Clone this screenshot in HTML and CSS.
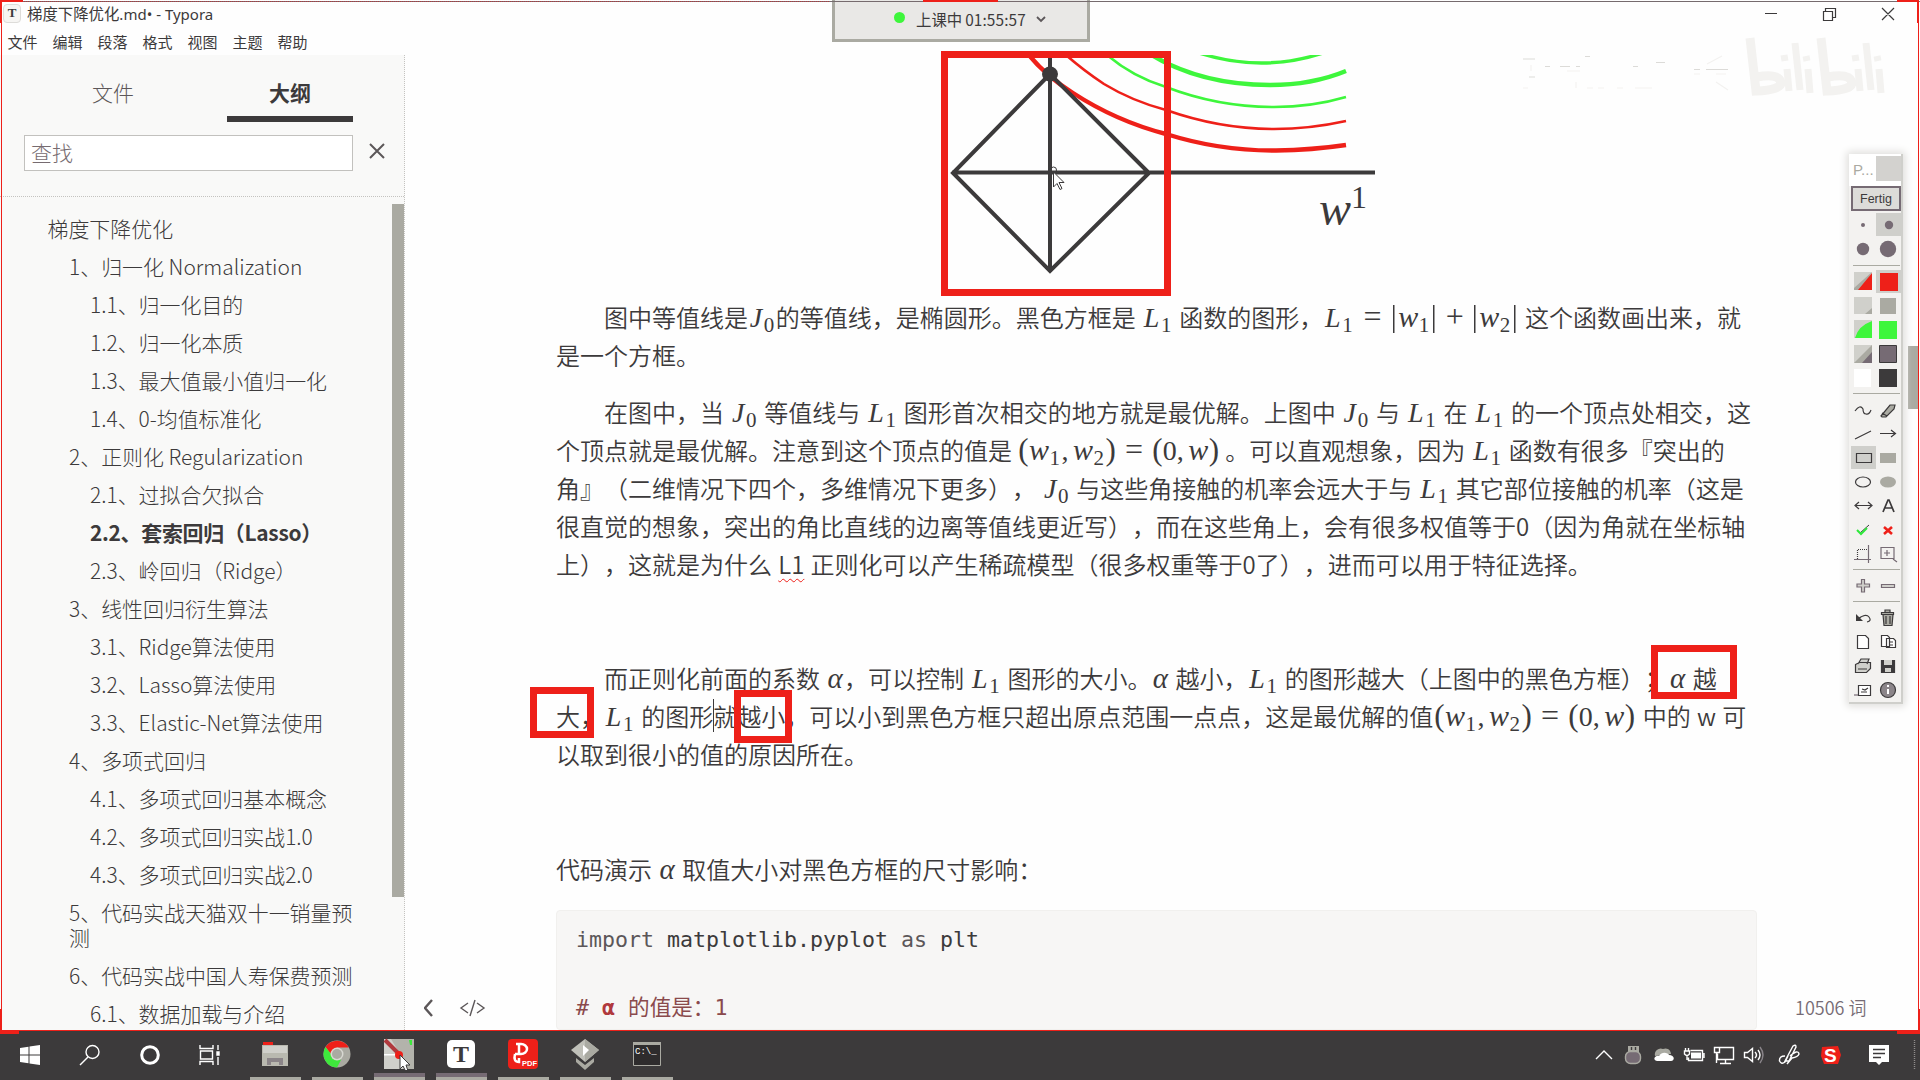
FILE: index.html
```html
<!DOCTYPE html>
<html lang="zh-CN">
<head>
<meta charset="utf-8">
<title>梯度下降优化.md• - Typora</title>
<link rel="stylesheet" href="styles.css">
</head>
<body>
<header class="titlebar">
  <span class="app-icon">T</span>
  <span class="title">梯度下降优化<span class="latin">.md• - Typora</span></span>
  <svg class="winbtns" width="132" height="14" viewBox="0 0 132 14"><path d="M1 6.5H13M59.500 4.500h9v9h-9zM61.500 4V1.500h10v9h-2.500M118 1l12 12M130 1l-12 12"/></svg>
</header>
<nav class="menubar"><span>文件</span><span>编辑</span><span>段落</span><span>格式</span><span>视图</span><span>主题</span><span>帮助</span></nav>

<main class="workspace">
  <aside class="sidebar">
    <div class="tabs"><span class="tab">文件</span><span class="tab active">大纲</span></div>
    <div class="search"><div class="search-box">查找</div><svg width="16" height="16" viewBox="0 0 16 16"><path d="M1 1l14 14M15 1L1 15"/></svg></div>
    <div class="outline">
      <ul class="items">
        <li class="l1">梯度下降优化</li>
        <li class="l2">1、归一化 Normalization</li>
        <li class="l3">1.1、归一化目的</li>
        <li class="l3">1.2、归一化本质</li>
        <li class="l3">1.3、最大值最小值归一化</li>
        <li class="l3">1.4、0-均值标准化</li>
        <li class="l2">2、正则化 Regularization</li>
        <li class="l3">2.1、过拟合欠拟合</li>
        <li class="l3 current">2.2、套索回归（Lasso）</li>
        <li class="l3">2.3、岭回归（Ridge）</li>
        <li class="l2">3、线性回归衍生算法</li>
        <li class="l3">3.1、Ridge算法使用</li>
        <li class="l3">3.2、Lasso算法使用</li>
        <li class="l3">3.3、Elastic-Net算法使用</li>
        <li class="l2">4、多项式回归</li>
        <li class="l3">4.1、多项式回归基本概念</li>
        <li class="l3">4.2、多项式回归实战1.0</li>
        <li class="l3">4.3、多项式回归实战2.0</li>
        <li class="l2">5、代码实战天猫双十一销量预<br>测</li>
        <li class="l2">6、代码实战中国人寿保费预测</li>
        <li class="l3">6.1、数据加载与介绍</li>
      </ul>
      <div class="side-scroll"></div>
    </div>
  </aside>

  <section class="side-tools">
    <svg width="62" height="20" viewBox="0 0 62 20"><path class="back" d="M8 2L1 10l7 8"/><path class="src" d="M44 5l-7 5 7 5M53 5l7 5-7 5M51 2l-5 16"/></svg>
  </section>

  <article class="doc">
    <svg class="figure" width="1201" height="243" viewBox="556 55 1201 243">
      <g class="contours">
        <path class="r thick" d="M1028 54Q1046 76 1073 93Q1116 121 1166 134Q1220 151 1276 150.500Q1312 150 1346 145"/>
        <path class="r" d="M1066 55Q1083 70 1104 84Q1132 101 1166 110Q1220 129 1274 129Q1310 129 1346 121"/>
        <path class="g" d="M1107 55Q1133 77 1166 87Q1218 107 1274 107Q1312 107 1346 97"/>
        <path class="g thick" d="M1148 53Q1200 85 1270 85Q1312 85 1346 71"/>
        <path class="g mid" d="M1196 52Q1262 74 1326 52"/>
      </g>
      <path class="axes" d="M1050 55V272M952 172.500H1375M1050 74L953 173L1050 271L1149 173Z"/>
      <ellipse class="dot" cx="1050" cy="74" rx="8" ry="7.500"/>
      <text class="wlabel" x="1319" y="225">w</text><text class="wsup" x="1351" y="208">1</text>
      <path class="pointer" d="M1053.500 172v15l3.500-3.500 3 6 2-1-3-6h5z"/><circle class="ring" cx="1053.500" cy="170" r="3"/>
    </svg>
    <p>
      <span class="line ind">图中等值线是<i class="J">J</i><sub>0</sub>的等值线，是椭圆形。黑色方框是 <i class="L">L</i><sub>1</sub> 函数的图形，<i class="L">L</i><sub>1</sub><b class="rel">=</b><b class="bar"></b><i class="w">w</i><sub>1</sub><b class="bar"></b><b class="rel plus">+</b><b class="bar"></b><i class="w">w</i><sub>2</sub><b class="bar"></b> 这个函数画出来，就</span>
      <span class="line">是一个方框。</span>
    </p>
    <p>
      <span class="line ind">在图中，当 <i class="J">J</i><sub>0</sub> 等值线与 <i class="L">L</i><sub>1</sub> 图形首次相交的地方就是最优解。上图中 <i class="J">J</i><sub>0</sub> 与 <i class="L">L</i><sub>1</sub> 在 <i class="L">L</i><sub>1</sub> 的一个顶点处相交，这</span>
      <span class="line">个顶点就是最优解。注意到这个顶点的值是 <b class="par">(</b><i class="w">w</i><sub>1</sub><b class="com">,</b><i class="w">w</i><sub>2</sub><b class="par">)</b><b class="rel">=</b><b class="par">(</b><b class="num">0</b><b class="com">,</b><i class="w">w</i><b class="par">)</b> 。可以直观想象，因为 <i class="L">L</i><sub>1</sub> 函数有很多『突出的</span>
      <span class="line">角』（二维情况下四个，多维情况下更多）， <i class="J">J</i><sub>0</sub> 与这些角接触的机率会远大于与 <i class="L">L</i><sub>1</sub> 其它部位接触的机率（这是</span>
      <span class="line">很直觉的想象，突出的角比直线的边离等值线更近写），而在这些角上，会有很多权值等于0（因为角就在坐标轴</span>
      <span class="line">上），这就是为什么 <span class="misspell">L1</span> 正则化可以产生稀疏模型（很多权重等于0了），进而可以用于特征选择。</span>
    </p>
    <p class="gap">
      <span class="line ind">而正则化前面的系数 <i class="al">α</i>，可以控制 <i class="L">L</i><sub>1</sub> 图形的大小。<i class="al">α</i> 越小，<i class="L">L</i><sub>1</sub> 的图形越大（上图中的黑色方框）；<i class="al">α</i> 越</span>
      <span class="line">大，<i class="L">L</i><sub>1</sub> 的图形就越小，可以小到黑色方框只超出原点范围一点点，这是最优解的值<span class="pair"><b class="par">(</b><i class="w">w</i><sub>1</sub><b class="com">,</b><i class="w">w</i><sub>2</sub><b class="par">)</b><b class="rel">=</b><b class="par">(</b><b class="num">0</b><b class="com">,</b><i class="w">w</i><b class="par">)</b></span> 中的 w 可</span>
      <span class="line">以取到很小的值的原因所在。</span>
    </p>
    <p class="gap"><span class="line">代码演示 <i class="al">α</i> 取值大小对黑色方框的尺寸影响：</span></p>
    <pre class="code"><span class="kw">import</span> matplotlib.pyplot <span class="kw">as</span> plt

<span class="cm"># <b>α</b> 的值是：1</span></pre>
  </article>
  <div class="right-rail"><div class="doc-scroll"></div><div class="words">10506 词</div></div>
</main>

<footer class="taskbar">
  <div class="apps">
    <div class="app"><svg width="20" height="20" viewBox="0 0 20 20"><path fill="#fff" d="M0 3l8.500-1.200v7.700H0zM9.500 1.600L20 0v9.500H9.500zM0 10.500h8.500v7.700L0 17zM9.500 10.500H20V20L9.500 18.400z"/></svg></div>
    <div class="app"><svg width="22" height="22" viewBox="0 0 22 22" class="ln"><circle cx="13.500" cy="8" r="6.500"/><path d="M9 13l-8 8"/></svg></div>
    <div class="app"><svg width="22" height="22" viewBox="0 0 22 22"><circle cx="11" cy="11" r="8.300" fill="none" stroke="#fff" stroke-width="3"/></svg></div>
    <div class="app"><svg width="22" height="20" viewBox="0 0 22 20" class="ln"><path d="M1 0v3.500h13V0M1 20v-3.500h13V20M1.500 6h12v8h-12zM19 0v5M19 12v8"/><path fill="#fff" d="M18 7h2v3h-2z"/></svg></div>
    <div class="app run"><svg width="28" height="26" viewBox="0 0 28 26"><path fill="#b9b9b0" d="M1 4h26v21H1z"/><path fill="#ee2019" d="M2 1h10v3H2z"/><path fill="#d0d0cb" d="M2 5h24v7H2z"/><path fill="#8b8589" d="M6 17h16v7h-4v-3h-8v3H6z"/></svg></div>
    <div class="app run"><svg width="28" height="28" viewBox="0 0 28 28"><circle cx="14" cy="14" r="13.500" fill="#aaaaa2"/><path fill="#ee2019" d="M2.500 7A13.500 13.500 0 0 1 25.700 7.500H14L8 14z"/><path fill="#3ee83c" d="M2.500 7A13.500 13.500 0 0 0 14 27.500l4-7.500-10-6z"/><circle cx="14" cy="14" r="6.500" fill="#d8d8d2"/><circle cx="14" cy="14" r="5" fill="#aaaaa2"/></svg></div>
    <div class="app run hot"><svg width="32" height="32" viewBox="0 0 32 32"><path fill="#d0d0cb" d="M1 1h30v30H1z"/><path fill="#b3b3ab" d="M8 1h23v30H21L17 16z"/><path fill="#fff" d="M1 16h14v1.500H1z"/><path fill="#3ee83c" d="M26 2h3v5h-2z"/><path stroke="#b0393d" stroke-width="4" d="M2 2l13 13"/><circle cx="16" cy="17" r="4" fill="#ee2019"/><path fill="#fff" stroke="#3c3a3b" d="M17 17v14l3-3 3 6 2-1-2-6h4z"/></svg></div>
    <div class="app run hot"><span class="t-icon">T</span></div>
    <div class="app run"><svg width="30" height="30" viewBox="0 0 30 30"><rect width="30" height="30" rx="4" fill="#ee2019"/><path fill="none" stroke="#fff" stroke-width="2.500" d="M8 5h5a6 5 0 0 1 0 10H7M11 5v10M7 15q-2 8 4 8v-4"/><text x="14" y="27" font-size="7.500" font-weight="700" fill="#fff">PDF</text></svg></div>
    <div class="app run"><svg width="30" height="32" viewBox="0 0 30 32"><path fill="#c0c0b9" d="M15 1l14 11-14 12L1 12z"/><path fill="#aaaaa2" d="M15 1l14 11-14 12zM6 20l9 7 9-7v4l-9 8-9-8z"/><path fill="#fff" d="M13 7l6 5-6 6z"/></svg></div>
    <div class="app run"><svg width="28" height="24" viewBox="0 0 28 24"><path fill="#2e2c2d" stroke="#aaaaa2" d="M.500.500h27v23H.500z"/><path fill="#aaaaa2" d="M0 0h28v3H0z"/><text x="2" y="12" font-size="9" fill="#fff" class="mono">C:\_</text></svg></div>
  </div>
  <div class="tray">
    <svg class="ln" width="325" height="30" viewBox="1594 1040 325 30">
      <path d="M1596 1059l8-8 8 8"/>
      <path fill="#aaaaa2" stroke="none" d="M1628 1046h11v6h-11z"/><rect x="1625.500" y="1051.500" width="15" height="12" rx="5" fill="#766b74" stroke="#aaaaa2"/><path stroke="#3c3a3b" d="M1631.500 1047v3M1635.500 1047v3"/>
      <path fill="#aaaaa2" stroke="none" d="M1655 1056a6 6 0 0 1 8-7c5-2 8 2 8 5z"/><path fill="#fff" stroke="none" d="M1657 1061c-5-1-2-6 2-5 3-5 9-3 10-1 6 0 6 6 2 6z"/>
      <path d="M1690.500 1050.500h12v10h-14v-3M1704 1053v5M1684.500 1051h5v3q-2.500 3-5 0zM1685.500 1048v3M1688.500 1048v3M1687 1055v5"/><path fill="#fff" stroke="none" d="M1691 1052.500h10v6h-10z"/>
      <path d="M1719.500 1047.500h14v12h-16v-6M1725.500 1060v3M1720 1063.500h11M1714.500 1047.500h5v5h-5zM1716.500 1052v11"/>
      <path d="M1744.500 1052.500h3l5-4v13l-5-4h-3zM1755 1052q3 3 0 6M1758 1050q4 5 0 10"/><path stroke="#8a858a" d="M1760 1047q6 8 0 16"/>
      <path d="M1785 1061l8-15q3-2 3 1l-7 14zM1785 1056q-6 0-5.500 5 2 4 5.500 1l3-6M1790 1056q8-7 9-2-1 3-7 4l-5 6"/>
      <path fill="#ee2019" stroke="none" d="M1822 1047l16-1 3 9-3 9h-14l-3-8z"/><text x="1824" y="1062" font-size="19" font-weight="900" fill="#fff" stroke="none">S</text>
      <path fill="#fff" stroke="none" d="M1869 1045h20v17h-7l-3 3-3-3h-7z"/><path stroke="#3c3a3b" d="M1873 1049.500h12M1873 1053.500h12M1873 1057.500h8"/>
      <path stroke="#8f8c8b" stroke-dasharray="1 1" d="M1914.500 1040v30"/>
    </svg>
  </div>
</footer>

<!-- class timer, drawn over the title bar -->
<div class="timer"><i class="live"></i><span>上课中</span><span class="clock">01:55:57</span><svg width="10" height="8" viewBox="0 0 10 8"><path d="M1 2l4 4 4-4"/></svg></div>

<svg class="watermark" width="380" height="70" viewBox="1515 32 380 70">
  <g class="name"><path d="M1523 59h12M1529 77h6M1545 66.500h5M1560 66.500h10M1576 66.500h4M1585 56.500h5M1633 66.500h5M1656 62.500h9M1694 69.500h6M1706 69.500h22"/><path class="faint" d="M1523 88h5M1531 65v6M1576 88v-6M1567 71h13M1587 88h6M1598 88h6M1617 88h6M1635 88h17M1694 74h6M1716 74h10M1707 64l15-8M1716 82l12 8"/></g>
  <g class="logo"><path class="fat" d="M1750 38l6 53q26-1 25-9-3-9-24-5"/><path d="M1784 55l1 6M1787 69l2 22M1795 43l5 47M1806 56l1 5M1808 69l2 24"/></g>
  <g class="logo"><path class="fat" d="M1821 38l6 53q26-1 25-9-3-9-24-5"/><path d="M1855 55l1 6M1858 69l2 22M1866 43l5 47M1877 56l1 5M1879 69l2 24"/></g>
</svg>

<!-- screen pen palette -->
<div class="palette">
  <div class="pal-head"><span>P...</span><i></i></div>
  <div class="pal-btn">Fertig</div>
  <svg width="50" height="494" viewBox="1851 211 50 494">
    <path fill="#cfcfcb" d="M1876 213h25v23h-25zM1876 270h25v23h-25zM1851 446h25v23h-25z"/>
    <g fill="#766b74"><circle cx="1863" cy="225" r="2"/><circle cx="1889" cy="225" r="4.200"/><circle cx="1863" cy="249" r="6.200"/><circle cx="1888" cy="249" r="8.200"/></g>
    <path stroke="#aaaaa2" d="M1853 265.500h47M1853 393.500h47M1853 569.500h47M1853 601.500h47"/>
    <g fill="#d0d0cb"><path d="M1854 272h18v18h-18zM1854 297h18v17h-18zM1854 320h18v18h-18zM1854 345h18v18h-18z"/></g>
    <path fill="#aaaaa2" d="M1872 272l-18 16v2h7zM1854 363l18-18v18z"/>
    <path fill="#ee2019" d="M1872 273v17h-14zM1880 273h18v18h-18z"/>
    <path fill="#aaaaa2" d="M1872 308v6h-7zM1880 298h16v16h-16z"/>
    <path fill="#3ef63c" d="M1872 321v17h-17q3-12 17-17zM1879 321h18v18h-18z"/>
    <path fill="#766b74" stroke="#3c3a3b" d="M1879.500 345.500h17v17h-17z"/><path fill="#766b74" d="M1872 352v11h-10z"/>
    <path fill="#fff" d="M1854 369h17v18h-17z"/><path fill="#3c3a3b" d="M1879 369h18v18h-18z"/>
    <g class="pi">
      <path d="M1855 411q5-7 8-2 0 5 3 5 3 1 5-4M1855 439l16-8M1880 433.500h15M1891 430l4.500 3.500-4.500 3.500M1856.500 453.500h15v9h-15zM1856 505.500h15M1859 502l-4 3.500 4 3.500M1868 502l4 3.500-4 3.500"/>
      <path fill="#aaaaa2" d="M1881 416l9-11h5l-1 4-8 8h-4zM1882 413l5 3"/>
      <ellipse cx="1863" cy="482" rx="7.500" ry="5"/>
      <path stroke-width="1.700" d="M1883 512l5-12h1l5 12M1885 508h7"/>
      <path class="gr" d="M1854 559.500h17M1868.500 545v18M1881 547.500h13v11h-13zM1887 550v6M1884 553h6M1893 559l4 3"/><path stroke-dasharray="1 1" d="M1857.500 559v-9.500h10"/>
      <path fill="#d0d0cb" stroke="#766b74" d="M1857 584h4.500v-4.500h3v4.500h5v3h-5v5h-3v-5h-4.500zM1881.500 584.500h13v3h-13z"/>
      <path d="M1858 619q8-6 11-2 3 4-2 5"/><path fill="#3c3a3b" stroke="none" d="M1856 614v7h7z"/>
      <path fill="#aaaaa2" d="M1883 614.500h10l-1 11h-8zM1881.500 612.500h12v2h-12zM1885 612v-2h5v2M1886 616v8M1890 616v8"/>
      <path fill="#fff" d="M1857.500 635.500h8l3 3v10h-11zM1881.500 635.500h6l2 2v9h-8zM1886.500 638.500h7l2 2v7h-9zM1889 642h4M1889 645h4"/>
      <path fill="#d0d0cb" d="M1858 664l3-5h8l-2 5M1855.500 664.500l4-2h11v6l-4 4h-11zM1858 669h9"/>
      <path fill="#3c3a3b" d="M1881.500 660.500h13v12h-13z"/><path fill="#d0d0cb" stroke="none" d="M1884 660h8v5h-8zM1885 668h6v4h-6z"/>
      <path fill="#fff" d="M1858.500 685.500h12v10h-12zM1861 692h6M1862 689l3 1 3-2"/><path class="gr" d="M1854 695h4"/>
      <circle cx="1888" cy="690" r="7.500" fill="#8b8589"/><path stroke="#fff" stroke-width="2" d="M1888 689v5M1888 685v2"/>
    </g>
    <path fill="#aaaaa2" d="M1880 453h16v10h-16z"/><ellipse cx="1888" cy="482" rx="8" ry="5.500" fill="#aaaaa2"/>
    <path fill="none" stroke="#3c3a3b" d="M1860 533l9-8"/><path fill="none" stroke="#2ee83c" stroke-width="2" d="M1857 530l4 4 6-6"/>
    <path fill="none" stroke="#ee2019" stroke-width="2.600" d="M1884 527l8 7M1892 527l-8 7"/>
  </svg>
</div>

<!-- pen marks -->
<div class="mark m-fig"></div><div class="mark m-left"></div><div class="mark m-mid"></div><div class="mark m-right"></div><div class="caret"></div>
<svg class="frame" width="1920" height="1036" viewBox="0 0 1920 1036">
  <path stroke="#766b6e" d="M0 1.500H1920"/><path stroke="#b0393d" stroke-dasharray="1 1" d="M0 1.500H830M0 1030.500H1920"/>
  <path stroke="#ee2019" d="M1.500 0V1030M1918.500 0V1030M0 1030.500H1920"/>
  <path fill="#ee2019" d="M0 0h23v2H2v21H0zM923 0h75v2h-75zM1897 0h22v23h-2V2h-20zM0 1009h2v21h17v4H0zM1918 1009h2v25h-23v-4h21z"/>
</svg>
</body>
</html>
```
FILE: styles.css
```css
* { box-sizing: border-box; }
body {
  margin: 0; width: 1920px; height: 1080px; overflow: hidden; position: relative;
  display: flex; flex-direction: column; background: #fefefe; color: #3c3a3b;
  font-family: "Noto Sans CJK SC", "Open Sans", sans-serif;
  text-spacing-trim: space-all;
}
svg { display: block; fill: none; }

.titlebar { height: 30px; display: flex; align-items: center; padding: 0 0 3px 3px; font-size: 15.4px; }
.app-icon {
  width: 18px; height: 19px; border: 1px solid #dddcd9; border-radius: 4px; background: #f6f5f3;
  font: 700 13px/16px "Liberation Serif", serif; text-align: center;
}
.title { margin-left: 6px; line-height: 26px; }
.latin { font-family: "Noto Sans", "Open Sans", sans-serif; font-size: 15px; }
.winbtns { margin: 1px 24px 0 auto; stroke: #3c3a3b; stroke-width: 1.2; }
.menubar { height: 25px; display: flex; gap: 15px; padding-left: 7.5px; font-size: 15px; line-height: 23px; }

.workspace { flex: none; height: 975px; display: flex; overflow: hidden; }
.sidebar { width: 405px; background: #f9f9f8; border-right: 1px dotted #c4c3c0; font-size: 20.95px; font-weight: 300; display: flex; flex-direction: column; }
.tabs { display: flex; height: 67px; padding-left: 50px; }
.tab { width: 126px; margin-right: 51px; text-align: center; line-height: 74px; color: #5c5759; height: 67px; }
.tab.active { margin: 0; font-weight: 700; color: #3c3a3b; border-bottom: 6px solid #3c3a3b; }
.search { display: flex; align-items: center; gap: 16px; padding: 0 0 0 24px; height: 36px; margin-top: 13px; }
.search-box { width: 329px; height: 36px; background: #fff; border: 1px solid #c2c1be; padding-left: 6px; line-height: 33px; color: #766b70; }
.search svg { stroke: #5c5759; stroke-width: 2; margin-bottom: 5px; }
.outline { margin-top: 25px; border-top: 1px dotted #c4c3c0; flex: 1; display: flex; justify-content: space-between; }
.items { list-style: none; margin: 0; padding: 13px 0 0; white-space: nowrap; width: 380px; }
.items li { line-height: 25.6px; padding: 6.2px 0; }
.items .l1 { padding-left: 47.5px; }
.items .l2 { padding-left: 69px; }
.items .l3 { padding-left: 90px; }
.items .current { font-weight: 700; letter-spacing: -.3px; }
.side-scroll { width: 12px; height: 693px; margin-top: 7px; background: #aaaaa2; }

.side-tools { width: 151px; display: flex; align-items: flex-end; padding: 0 0 12px 19px; stroke: #5c5759; }
.back { stroke-width: 2.4; }
.src { stroke-width: 1.4; }

.doc { width: 1201px; }
.figure path, .figure circle { fill: none; }
.contours path { stroke-width: 2.6; }
.contours .thick { stroke-width: 4.4; }
.contours .mid { stroke-width: 3.4; }
.contours .r { stroke: #ee2019; }
.contours .g { stroke: #3ef63c; }
.axes { stroke: #3c3a3b; stroke-width: 4; }
.dot { fill: #3c3a3b; }
.figure .pointer { fill: #fff; stroke: #3c3a3b; }
.ring { stroke: #3c3a3b; }
.wlabel { font: italic 48px "Liberation Serif", serif; fill: #3c3a3b; }
.wsup { font: 32px "Liberation Serif", serif; fill: #3c3a3b; }

.doc p { margin: 0 0 19px; font-size: 24px; word-spacing: .9px; font-weight: 350; }
.doc p.gap { margin-top: 76px; }
.doc p.gap + p.gap { margin-top: 77px; }
.line { display: block; height: 38px; line-height: 38px; white-space: nowrap; }
.ind { padding-left: 48px; }
.line i, .line b, .line sub {
  display: inline-block; font: 400 28px/1 "Liberation Serif", serif; height: 28px; text-align: center; word-spacing: 0;
}
.line i { font-style: italic; }
.line sub { font-size: 21px; width: 12px; height: 21px; vertical-align: -5px; text-align: left; }
.line .L { width: 19px; }
.line .J { width: 15.7px; }
.line .w { width: 21px; font-size: 30px; }
.line .al { width: 17.7px; font-size: 29px; }
.line .rel { width: 36.500px; font-size: 32px; }
.line .plus { width: 34px; }
.line .bar { width: 7px; height: 28px; vertical-align: -6px; background: linear-gradient(#3c3a3b, #3c3a3b) center / 1.5px 100% no-repeat; }
.line .par { width: 10.3px; font-size: 31px; }
.line .com { width: 11px; text-align: left; }
.line .num { width: 14px; }
.pair { margin: 0 1.5px 0 1px; }
.misspell { text-decoration: underline wavy #ee2019 1px; text-underline-offset: 4px; text-decoration-skip-ink: none; }

.code {
  margin: 22px 0 0; height: 120px; padding: 12px 19px; background: #f7f6f5; border: 1px solid #f1f0ee; border-radius: 4px;
  font: 21.6px/33.900px "DejaVu Sans Mono", "Noto Sans CJK SC", monospace;
}
.kw { color: #5c5759; }
.cm { color: #8a4a4c; }
.cm b { color: #b0393d; }

.right-rail { flex: 1; display: flex; flex-direction: column; justify-content: space-between; padding: 291px 2px 9px 0; }
.doc-scroll { align-self: flex-end; width: 10px; height: 63px; background: #aaaaa2; }
.words { padding-left: 38px; font-size: 18px; line-height: 28px; color: #766b74; font-weight: 350; }

.taskbar { height: 50px; background: #3c3a3b; display: flex; justify-content: space-between; }
.apps { display: flex; font-family: "Liberation Sans", sans-serif; }
.app { width: 60px; height: 50px; display: flex; align-items: center; justify-content: center; }
.app:nth-child(4) { margin-right: 4px; }
.app.run { width: 62px; border-bottom: 3px solid transparent; background: linear-gradient(#aaaaa2, #aaaaa2) center bottom / 51px 3px no-repeat border-box; }
.app.hot { background: linear-gradient(#aaaaa2 0 0) center bottom / 51px 3px no-repeat border-box, linear-gradient(#766b74 0 0) center bottom / 51px 7px no-repeat border-box; }
.mono { font-family: "Liberation Mono", monospace; }
.ln { stroke: #fff; stroke-width: 1.4; }
.t-icon { width: 28px; height: 28px; border-radius: 5px; background: #fff; font: 700 24px/28px "Liberation Serif", serif; text-align: center; }
.tray { padding: 10px 1px 0 0; font-family: "Liberation Sans", sans-serif; }

.timer {
  position: absolute; left: 832px; top: 0; width: 258px; height: 42px; background: #e9e8e6;
  border: 3px solid #aaaaa2; border-top: 0; display: flex; align-items: center; padding: 0 0 1px 59px; font-size: 15.4px;
}
.live { width: 11px; height: 11px; border-radius: 50%; background: #3ef63c; margin: -3px 11px 0 0; }
.clock { margin: 0 9px 0 3px; width: 62px; white-space: nowrap; letter-spacing: .1px; }
.timer svg { stroke: #5c5759; stroke-width: 1.8; }

.watermark { position: absolute; left: 1515px; top: 32px; }
.name { stroke: #dcdbd8; stroke-width: 1.2; }
.name .faint { stroke: #f3f2f0; }
.logo { stroke: #f3f2f0; stroke-width: 7; }
.logo .fat { stroke-width: 9; }

.palette {
  position: absolute; left: 1849px; top: 154px; width: 54px; height: 550px; padding: 0 2px; background: #f3f2f0;
  border-right: 2px solid #cfcfcb; border-bottom: 2px solid #cfcfcb; box-shadow: 0 0 8px 2px #dddcd9; overflow: hidden;
  font-family: "Liberation Sans", sans-serif;
}
.pal-head { height: 32px; margin: 0 -2px; padding: 2px 0 5px 4px; background: #fff; display: flex; justify-content: space-between; color: #aaaaa2; font-size: 15px; line-height: 27px; }
.pal-head i { width: 25px; height: 25px; background: #d3d2cf; }
.pal-btn { width: 50px; height: 25px; border: 2px solid #766b74; background: #dddcd9; font-size: 12.5px; line-height: 22px; text-align: center; }
.pi { stroke: #3c3a3b; stroke-width: 1.2; }
.pi .gr { stroke: #766b74; }

.mark { position: absolute; border: 7px solid #ee2019; }
.m-fig { left: 941px; top: 51px; width: 230px; height: 245px; }
.m-left { left: 530px; top: 687px; width: 64px; height: 51px; }
.m-mid { left: 734px; top: 690px; width: 58px; height: 53px; }
.m-right { left: 1651px; top: 645px; width: 86px; height: 54px; }
.caret { position: absolute; left: 713px; top: 699px; width: 1px; height: 33px; background: #3c3a3b; }
.frame { position: absolute; left: 0; top: 0; }
```
